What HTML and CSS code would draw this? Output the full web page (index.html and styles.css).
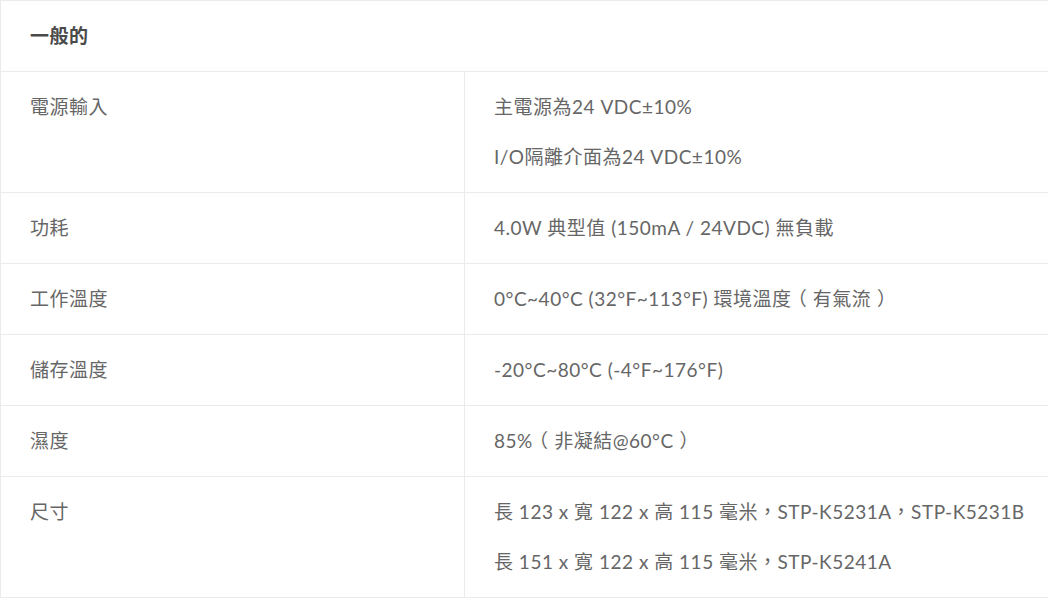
FILE: index.html
```html
<!DOCTYPE html>
<html lang="zh-Hant">
<head>
<meta charset="utf-8">
<title>一般的</title>
<link rel="stylesheet" href="styles.css">
</head>
<body>
<div class="spec">
  <div class="spec-head">一般的</div>
  <div class="spec-row">
    <div class="spec-label">電源輸入</div>
    <div class="spec-value">
      <p>主電源為24 VDC±10%</p>
      <p>I/O隔離介面為24 VDC±10%</p>
    </div>
  </div>
  <div class="spec-row">
    <div class="spec-label">功耗</div>
    <div class="spec-value"><p>4.0W 典型值 (150mA / 24VDC) 無負載</p></div>
  </div>
  <div class="spec-row">
    <div class="spec-label">工作溫度</div>
    <div class="spec-value"><p>0°C~40°C (32°F~113°F) 環境溫度<span class="fwp">（</span>有氣流<span class="fwp">）</span></p></div>
  </div>
  <div class="spec-row">
    <div class="spec-label">儲存溫度</div>
    <div class="spec-value"><p>-20°C~80°C (-4°F~176°F)</p></div>
  </div>
  <div class="spec-row">
    <div class="spec-label">濕度</div>
    <div class="spec-value"><p>85%<span class="fwp">（</span>非凝結@60°C<span class="fwp">）</span></p></div>
  </div>
  <div class="spec-row">
    <div class="spec-label">尺寸</div>
    <div class="spec-value">
      <p>長 123 x 寬 122 x 高 115 毫米，STP-K5231A，STP-K5231B</p>
      <p>長 151 x 寬 122 x 高 115 毫米，STP-K5241A</p>
    </div>
  </div>
</div>
</body>
</html>
```
FILE: styles.css
```css
html, body {
  margin: 0;
  padding: 0;
  background: #fff;
}

body {
  font-family: Lato, "Noto Sans CJK TC", sans-serif;
  font-size: 19px;
  letter-spacing: 0.5px;
  color: #666;
}

.spec {
  border-left: 1px solid #ebebeb;
  border-top: 1px solid #ebebeb;
}

.spec-head {
  padding: 20px 29px;
  line-height: 30px;
  font-weight: 700;
  color: #4a4a4a;
  border-bottom: 1px solid #ebebeb;
}

.spec-row {
  display: grid;
  grid-template-columns: 464px 1fr;
  border-bottom: 1px solid #ebebeb;
}

.spec-label {
  box-sizing: border-box;
  padding: 20px 29px;
  line-height: 30px;
  border-right: 1px solid #ebebeb;
}

.spec-value {
  padding: 20px 10px 20px 29px;
  line-height: 30px;
}

.spec-value p {
  margin: 0 0 20px;
  white-space: nowrap;
}

.spec-value p:last-child {
  margin-bottom: 0;
}

.fwp {
  font-feature-settings: "halt" 1;
  margin: 0 0.3em;
}
```
